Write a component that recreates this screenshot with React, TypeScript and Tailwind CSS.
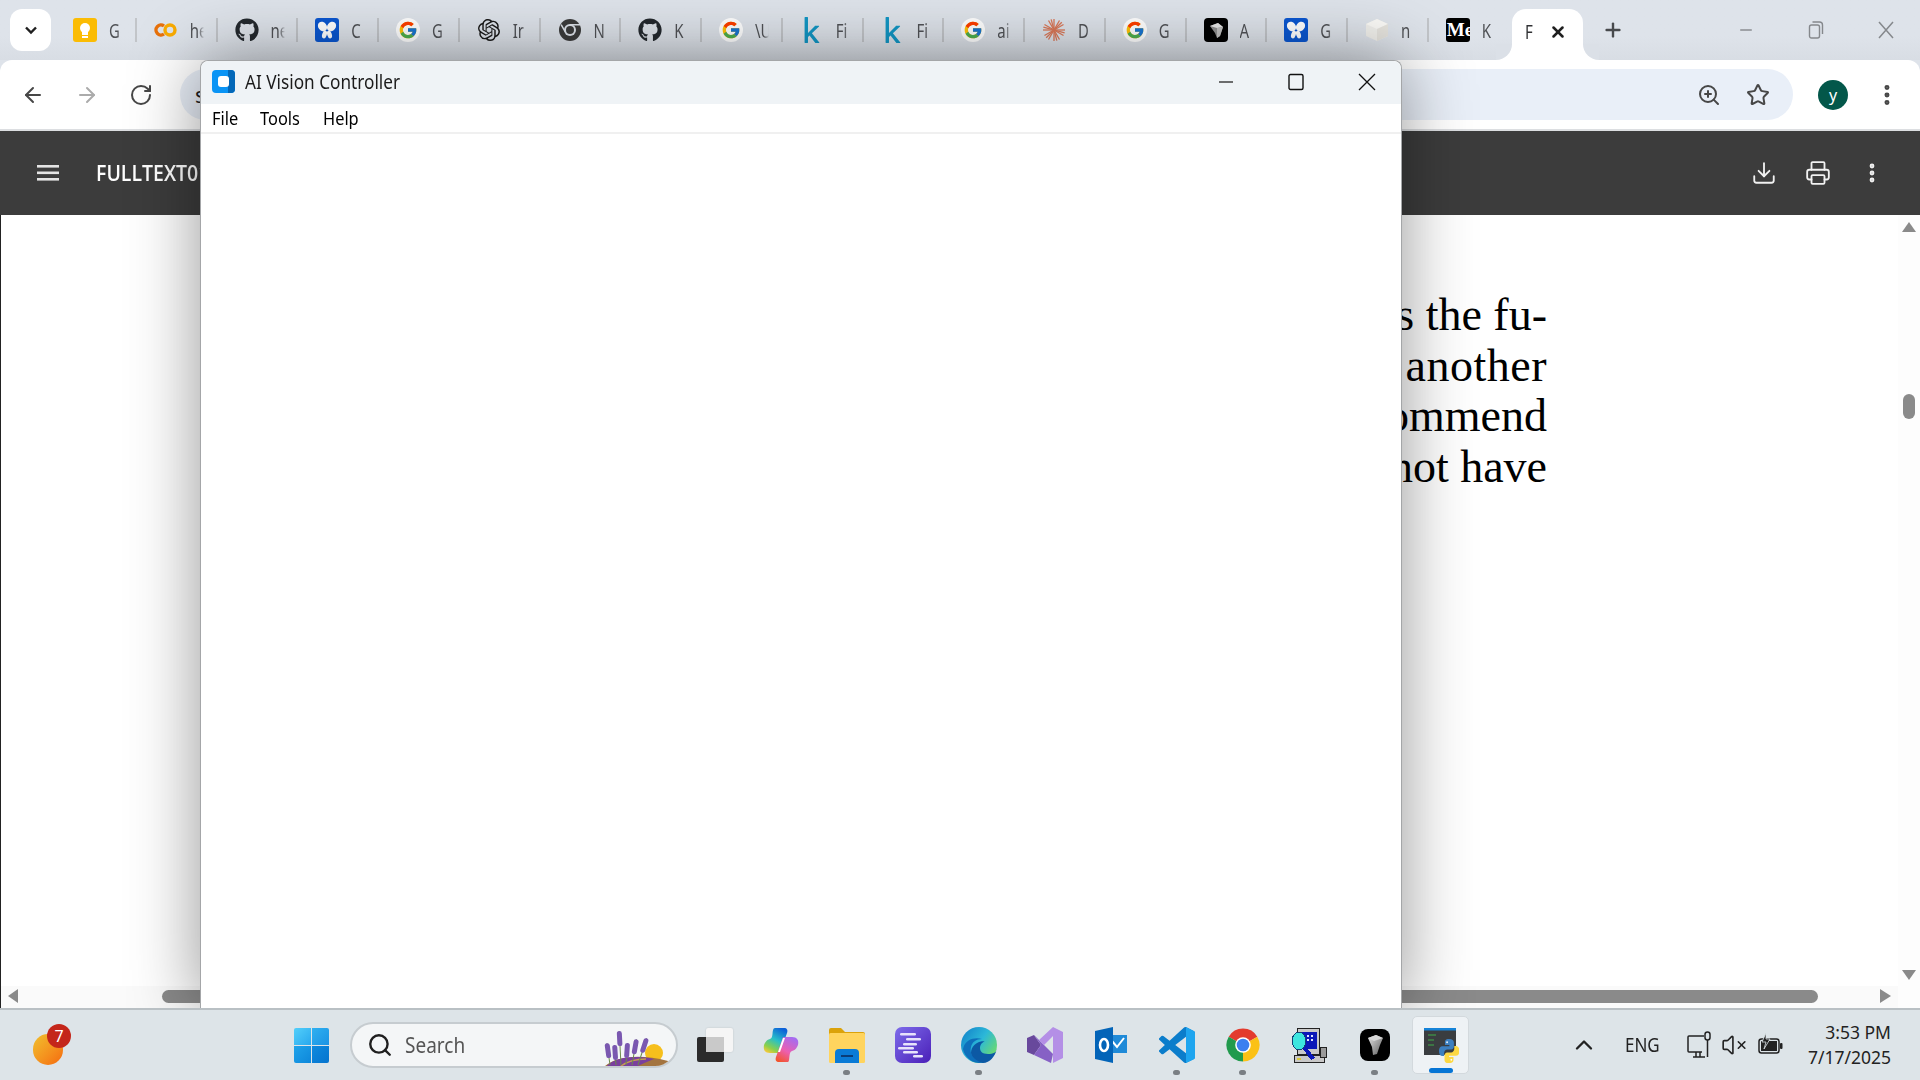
import type { ReactNode } from "react";
import { ArrowLeft, ArrowRight, ChevronUp, Download, EllipsisVertical, Minus, Plus, Printer, RotateCw, Search, Star, VolumeX, X, ZoomIn } from "lucide-react";
import { FcGoogle } from "react-icons/fc";
import { FaGithub, FaKaggle } from "react-icons/fa";
import { SiOpenai } from "react-icons/si";

const ui = { fontFamily: '"Noto Sans", sans-serif' };

function Keep() {
    return <svg width="24" height="24" viewBox="0 0 24 24">
        <rect x="0" y="0" width="24" height="24" rx="3" fill="#fbbc04" />
        <circle cx="12" cy="10" r="5" fill="#fff" />
        <rect x="9" y="13" width="6" height="4" fill="#fff" />
        <rect x="9" y="18" width="6" height="2" fill="#fff" />
    </svg>
}

function Colab() {
    return <svg width="24" height="24" viewBox="0 0 24 24" fill="none" strokeWidth="3.4">
        <path d="M10 8a5 5 0 1 0 0 8" stroke="#e8710a" />
        <circle cx="16" cy="12" r="5" stroke="#f9ab00" />
    </svg>
}

function Butterfly() {
    return <svg width="24" height="24" viewBox="0 0 24 24">
        <rect width="24" height="24" rx="3" fill="#0b57d0" />
        <g fill="#fff">
            <ellipse cx="7.500" cy="8.500" rx="4.200" ry="5.200" transform="rotate(-38 7.500 8.500)" />
            <ellipse cx="16.500" cy="8.500" rx="4.200" ry="5.200" transform="rotate(38 16.500 8.500)" />
            <ellipse cx="9.500" cy="16.500" rx="2.300" ry="4" transform="rotate(18 9.500 16.500)" />
            <ellipse cx="14.500" cy="16.500" rx="2.300" ry="4" transform="rotate(-18 14.500 16.500)" />
        </g>
    </svg>
}

function GoogleTab() {
    return <div className="w-6 h-6 rounded-full bg-white flex items-center justify-center">
        <FcGoogle size={20} />
    </div>
}

function ChromeGray() {
    return <svg width="24" height="24" viewBox="0 0 24 24">
        <circle cx="12" cy="12" r="11" fill="#3c3c3c" />
        <circle cx="12" cy="12" r="6" fill="#dee3ea" />
        <circle cx="12" cy="12" r="4" fill="#3c3c3c" />
        <path d="M12 6h10v1.5H12zM6.5 14l-4-7 1.3-.8 4 7z" fill="#dee3ea" />
    </svg>
}

function Burst() {
    const angles = [0, 30, 60, 90, 120, 150, 15, 75, 135];
    return <svg width="24" height="24" viewBox="0 0 24 24">
        {angles.map((a) => <line key={a} x1="1" y1="12" x2="23" y2="12" stroke="#d97757" strokeWidth="1.3" transform={`rotate(${a} 12 12)`} />)}
    </svg>
}

function BlackGem() {
    return <svg width="24" height="24" viewBox="0 0 24 24">
        <rect width="24" height="24" rx="4" fill="#000" />
        <path d="M6 8l8-3 5 4-3 9-3 2-2-5z" fill="#8f8f8f" />
        <path d="M6 8l8-3 5 4-6 1z" fill="#e6e6e6" />
        <path d="M13 10l6-1-3 9-3 2z" fill="#bfbfbf" />
    </svg>
}

function Cube() {
    return <svg width="24" height="24" viewBox="0 0 24 24">
        <path d="M12 1l11 5v12l-11 5-11-5V6z" fill="#f1f0ec" />
        <path d="M12 1l11 5-11 5L1 6z" fill="#fbfaf7" />
        <path d="M23 6v12l-11 5V11z" fill="#e6e4de" />
    </svg>
}

function Medium() {
    return <div className="w-6 h-6 rounded-[3px] bg-black overflow-hidden text-white font-bold text-[19px] leading-6 pl-px" style={{ fontFamily: '"Liberation Serif", serif' }}>Me</div>
}

const tabs: { icon: ReactNode; letter: string }[] = [
    { icon: <Keep />, letter: "G" },
    { icon: <Colab />, letter: "he" },
    { icon: <FaGithub size={24} color="#24292e" />, letter: "ne" },
    { icon: <Butterfly />, letter: "C" },
    { icon: <GoogleTab />, letter: "G" },
    { icon: <SiOpenai size={22} color="#1a1a1a" />, letter: "Ir" },
    { icon: <ChromeGray />, letter: "N" },
    { icon: <FaGithub size={24} color="#24292e" />, letter: "K" },
    { icon: <GoogleTab />, letter: "\\U" },
    { icon: <FaKaggle size={26} color="#1296c4" />, letter: "Fi" },
    { icon: <FaKaggle size={26} color="#1296c4" />, letter: "Fi" },
    { icon: <GoogleTab />, letter: "ai" },
    { icon: <Burst />, letter: "D" },
    { icon: <GoogleTab />, letter: "G" },
    { icon: <BlackGem />, letter: "A" },
    { icon: <Butterfly />, letter: "G" },
    { icon: <Cube />, letter: "n" },
    { icon: <Medium />, letter: "K" },
];

function TabStrip() {
    return <div className="h-[60px] flex items-center bg-linear-to-b from-[#dee3ea] from-60% to-[#d8dde4] shrink-0">
        <div className="w-[56px] h-full flex items-center pl-[10px] shrink-0">
            <div className="w-[41px] h-[42px] rounded-[12px] bg-white flex items-center justify-center">
                <svg width="16" height="16" viewBox="0 0 16 16" fill="none" stroke="#1f1f1f" strokeWidth="2.4"><path d="M3 5.500l5 5 5-5" /></svg>
            </div>
        </div>
        {tabs.map((t, i) => <div key={i} className={`w-[80.75px] h-6 flex items-center pl-[17px] shrink-0 ${i < tabs.length - 1 ? "border-r-2 border-[#c2c5c9]" : ""}`}>
            <div className="w-6 h-6 flex items-center justify-center shrink-0">{t.icon}</div>
            <div className="ml-[12px] w-[14px] overflow-hidden whitespace-nowrap text-[15px] text-[#505256] scale-y-[1.3] [mask-image:linear-gradient(to_right,black_60%,transparent)]" style={ui}>{t.letter}</div>
        </div>)}
        <div className="relative self-end ml-[2.5px] w-[71px] h-[51px] bg-white rounded-t-[14px] flex items-center pl-[13px] pb-[6px] shrink-0">
            <div className="absolute -left-4 bottom-0 w-4 h-4 bg-white" />
            <div className="absolute -left-4 bottom-0 w-4 h-4 bg-[#dbe0e7] rounded-br-[16px]" />
            <div className="absolute -right-4 bottom-0 w-4 h-4 bg-white" />
            <div className="absolute -right-4 bottom-0 w-4 h-4 bg-[#dbe0e7] rounded-bl-[16px]" />
            <div className="w-[11px] overflow-hidden text-[15px] text-[#303134] scale-y-[1.3]" style={ui}>F</div>
            <X size={18} strokeWidth={3.4} color="#1f1f1f" className="ml-[13px]" />
        </div>
        <Plus size={22} strokeWidth={2.6} color="#47494c" className="ml-[19px]" />
        <div className="ml-auto flex items-center gap-[54px] pr-[26px]">
            <Minus size={18} color="#8a8d91" className="-mx-px" />
            <svg width="16" height="20" viewBox="0 0 16 20" fill="none" stroke="#85888c" strokeWidth="1.4">
                <rect x="1.500" y="5" width="10" height="13" rx="2" />
                <path d="M4.500 2h7a3 3 0 0 1 3 3v9" />
            </svg>
            <svg width="16" height="18" viewBox="0 0 16 18" fill="none" stroke="#85888c" strokeWidth="1.5"><path d="M1 1l14 16M15 1L1 17" /></svg>
        </div>
    </div>
}

function BrowserBar() {
    return <div className="h-[71px] shrink-0 bg-white rounded-t-[12px] border-b-2 border-[#dcdee1] flex items-center">
        <div className="pl-[21px] flex items-center gap-[30px]">
            <ArrowLeft size={24} color="#474747" />
            <ArrowRight size={24} color="#ababab" />
            <RotateCw size={24} color="#474747" />
        </div>
        <div className="ml-[27px] w-[1613px] h-[51px] rounded-full bg-[#e9eff8] flex items-center justify-end pr-[23px] gap-[25px]">
            <div className="mr-auto ml-[15px] text-[22px] text-[#1f1f1f]" style={ui}>s</div>
            <ZoomIn size={24} color="#474747" />
            <Star size={24} color="#474747" />
        </div>
        <div className="ml-[25px] w-[30px] h-[30px] rounded-full bg-[#03574a] text-white text-[16px] flex items-center justify-center" style={ui}>y</div>
        <EllipsisVertical size={26} strokeWidth={2.6} color="#474747" className="ml-[26px]" />
    </div>
}

function PdfBar() {
    return <div className="h-[84px] shrink-0 bg-[#3c3c3c] flex items-center pl-[37px] pr-[36px] text-white">
        <svg width="22" height="16" viewBox="0 0 22 16" fill="#e4e4e4">
            <rect y="0" width="22" height="2.600" />
            <rect y="6.500" width="22" height="2.600" />
            <rect y="13" width="22" height="2.600" />
        </svg>
        <div className="ml-[37px] text-[19.5px] font-semibold inline-block scale-y-[1.12] origin-left" style={{ fontFamily: '"Open Sans", sans-serif' }}>FULLTEXT01.pdf</div>
        <div className="ml-auto flex items-center">
            <Download size={26} strokeWidth={1.7} color="#f1f1f1" />
            <Printer size={26} strokeWidth={1.7} color="#f1f1f1" className="ml-[28px]" />
            <EllipsisVertical size={24} strokeWidth={2.8} color="#f1f1f1" className="ml-[29px]" />
        </div>
    </div>
}

function DocArea() {
    return <div className="flex-1 flex min-h-0 border-l border-[#222]">
        <div className="flex-1 flex flex-col min-w-0">
            <div className="flex-1 pt-[75px] pr-[351px] text-right text-black text-[46px] leading-[50.5px] bg-white" style={{ fontFamily: '"Liberation Serif", serif' }}>
                <p>s the fu-</p>
                <p className="tracking-[0.5px]">another</p>
                <p>ommend</p>
                <p>not have</p>
            </div>
            <div className="h-[22px] bg-[#fafafa] flex items-center pb-[2px]">
                <div className="ml-[7px] w-0 h-0 border-y-[7px] border-y-transparent border-r-[10px] border-r-[#8a8a8a]" />
                <div className="ml-[144px] w-[1656px] h-[13px] rounded-full bg-[#8a8a8a]" />
                <div className="ml-[62px] w-0 h-0 border-y-[7px] border-y-transparent border-l-[11px] border-l-[#8a8a8a]" />
            </div>
        </div>
        <div className="w-[22px] bg-[#fdfdfd] flex flex-col items-center pt-[7px] pb-[28px]">
            <div className="w-0 h-0 border-x-[7px] border-x-transparent border-b-[10px] border-b-[#8a8a8a]" />
            <div className="mt-[162px] w-[12px] h-[25px] rounded-full bg-[#8a8a8a]" />
            <div className="mt-auto w-0 h-0 border-x-[7px] border-x-transparent border-t-[10px] border-t-[#8a8a8a]" />
        </div>
    </div>
}

function AppWindow() {
    return <div className="absolute left-[200px] top-[60px] z-10 w-[1202px] h-[949px] bg-white rounded-t-[8px] border border-b-0 border-[#a4a6a8] shadow-[0_0_70px_rgba(0,0,0,0.42)] text-black" style={ui}>
        <div className="h-[43px] bg-[#eff3f6] rounded-t-[8px] flex items-center pl-[11px] pr-[25px] pb-[2px]">
            <svg width="23" height="23" viewBox="0 0 23 23">
                <rect width="23" height="23" rx="4" fill="#0a94f5" />
                <path d="M16 0h3a4 4 0 0 1 4 4v15a4 4 0 0 1-4 4h-3z" fill="#0468b8" />
                <rect x="6" y="6" width="11" height="11" rx="3" fill="#fff" />
            </svg>
            <span className="ml-[10px] text-[17.2px] inline-block scale-y-[1.15] text-[#1c1c1c]">AI Vision Controller</span>
            <div className="ml-auto flex items-center gap-[54px]">
                <svg width="16" height="16" viewBox="0 0 16 16" stroke="#111" strokeWidth="1.2"><path d="M1 8h14" /></svg>
                <svg width="16" height="18" viewBox="0 0 16 18" fill="none" stroke="#111" strokeWidth="1.4"><rect x="1" y="1.500" width="14" height="15" rx="1.500" /></svg>
                <svg width="18" height="18" viewBox="0 0 18 18" fill="none" stroke="#111" strokeWidth="1.3"><path d="M1 1l16 16M17 1L1 17" /></svg>
            </div>
        </div>
        <div className="h-[28px] flex items-center pl-[11px] border-b-2 border-[#f0f0f0] box-content text-[16.4px]">
            <span className="inline-block scale-y-[1.15] w-[48px]">File</span>
            <span className="inline-block scale-y-[1.15] w-[63px]">Tools</span>
            <span className="inline-block scale-y-[1.15]">Help</span>
        </div>
    </div>
}

function Lavender() {
    const stems = [
        { x: 6, top: 14, a: -8 },
        { x: 12, top: 16, a: -4 },
        { x: 17, top: 2, a: -3 },
        { x: 22, top: 14, a: 4 },
        { x: 28, top: 10, a: 10 },
        { x: 34, top: 8, a: 18 },
    ];
    return <svg width="66" height="38" viewBox="0 0 66 38">
        <circle cx="50" cy="24" r="9" fill="#f6bf1c" />
        <path d="M0 38c10-10 34-14 64-6 1 2 2 6-2 6z" fill="#a3743f" />
        <path d="M2 38C10 28 30 26 50 30c-8 3-14 6-18 8z" fill="#7a3f9e" />
        <path d="M16 38c6-5 14-8 26-8" stroke="#c59a52" strokeWidth="1.4" fill="none" />
        {stems.map((s) => <g key={s.x} transform={`rotate(${s.a} ${s.x} 36)`}>
            <line x1={s.x} y1="36" x2={s.x} y2={s.top} stroke="#6c8a4a" strokeWidth="1" />
            <rect x={s.x - 2.500} y={s.top} width="5" height="15" rx="2.500" fill="#7a58b0" />
        </g>)}
    </svg>
}

function Copilot() {
    return <svg width="36" height="36" viewBox="0 0 36 36" fill="none">
        <defs>
            <linearGradient id="cpa" x1="0.7" y1="0" x2="0.2" y2="1"><stop offset="0" stopColor="#0d62d8" /><stop offset="0.45" stopColor="#27c0c8" /><stop offset="0.8" stopColor="#8bd04a" /><stop offset="1" stopColor="#f5c93a" /></linearGradient>
            <linearGradient id="cpb" x1="0.7" y1="0" x2="0.2" y2="1"><stop offset="0" stopColor="#a56cf0" /><stop offset="0.55" stopColor="#ec5fb0" /><stop offset="1" stopColor="#f2542d" /></linearGradient>
        </defs>
        <path d="M12 1h9c3 0 4 2 3 5l-7 20H7c-5 0-7-3-6-8 1-2 2-5 6-6 2-1 2-2 2.500-5 .3-3 .5-6 2.500-6z" fill="url(#cpa)" />
        <path d="M25 35h-9c-3 0-4-2-3-5l7-20h9c5 0 7 3 6 8-1 2-2 5-6 6-2 1-2 2-2.500 5-.3 3-.5 6-1.500 6z" fill="url(#cpb)" />
        <path d="M20 11l-5 14h2l5-14z" fill="#fff" />
    </svg>
}

function Folder() {
    return <svg width="36" height="36" viewBox="0 0 36 36">
        <path d="M0 3a2 2 0 0 1 2-2h10l4 4h18a2 2 0 0 1 2 2v4H0z" fill="#dba20a" />
        <rect y="6" width="36" height="30" rx="1.500" fill="#ffd45e" />
        <path d="M6 36v-10a4 4 0 0 1 4-4h16a4 4 0 0 1 4 4v10z" fill="#0a7bd6" />
        <rect x="12" y="28" width="12" height="2" fill="#0a3d78" />
    </svg>
}

function PurpleNotes() {
    return <svg width="36" height="36" viewBox="0 0 36 36">
        <defs><linearGradient id="pn" x1="0" y1="0" x2="1" y2="1"><stop offset="0" stopColor="#7d6bea" /><stop offset="1" stopColor="#4a1fb8" /></linearGradient></defs>
        <rect width="36" height="36" rx="7" fill="url(#pn)" />
        <g fill="#e7e2fb">
            <rect x="5" y="6" width="16" height="2.600" rx="1.300" />
            <rect x="11" y="11" width="15" height="2.600" rx="1.300" />
            <rect x="8" y="16" width="14" height="2.600" rx="1.300" />
            <rect x="3" y="20" width="16" height="2.600" rx="1.300" />
            <rect x="8" y="24" width="15" height="2.600" rx="1.300" />
            <rect x="18" y="28" width="10" height="2.600" rx="1.300" />
        </g>
    </svg>
}

function Edge() {
    return <svg width="36" height="36" viewBox="0 0 36 36">
        <defs><linearGradient id="ed" x1="0" y1="0" x2="1" y2="0.7"><stop offset="0" stopColor="#0f7dc9" /><stop offset="0.55" stopColor="#2cb8d8" /><stop offset="1" stopColor="#6fdc6a" /></linearGradient></defs>
        <circle cx="18" cy="18" r="18" fill="url(#ed)" />
        <path d="M36 22c0 3-4 5-9 5-6 0-8-3-8-6 0-5 5-7 5-7-9 0-14 6-14 12 0 6 6 10 12 10 7 0 12-7 14-14z" fill="#0c59a4" />
        <path d="M10 20c-2 8 4 14 12 16-9 1-18-4-20-14 2-10 12-12 19-10-6 0-10 3-11 8z" fill="#0e6fbb" />
    </svg>
}

function VisualStudio() {
    return <svg width="36" height="36" viewBox="0 0 36 36">
        <path d="M0 11l7-3 7 10-7 10-7-3z" fill="#68489c" />
        <path d="M7 8l19 19-2 9L7 28l7-10z" fill="#8661c5" />
        <path d="M26 0l10 5v26l-10 5V9l-9 9-5-5z" fill="#b48fe6" />
    </svg>
}

function Outlook() {
    return <svg width="32" height="36" viewBox="0 0 32 36">
        <path d="M14 8h18v18H14z" fill="#1f8ad8" />
        <path d="M17 14l5 6 7-9" fill="none" stroke="#fff" strokeWidth="2" />
        <path d="M0 4l18-4v36L0 32z" fill="#0364b8" />
        <ellipse cx="9" cy="18" rx="4" ry="6" fill="none" stroke="#fff" strokeWidth="2.600" />
    </svg>
}

function VsCode() {
    return <svg width="36" height="36" viewBox="0 0 24 24">
        <path d="M23.15 2.587L18.21.21a1.494 1.494 0 0 0-1.705.29l-9.46 8.63-4.12-3.128a.999.999 0 0 0-1.276.057L.327 7.261A1 1 0 0 0 .326 8.74L3.899 12 .326 15.26a1 1 0 0 0 .001 1.479L1.65 17.94a.999.999 0 0 0 1.276.057l4.12-3.128 9.46 8.63a1.492 1.492 0 0 0 1.704.29l4.942-2.377A1.5 1.5 0 0 0 24 20.06V3.939a1.5 1.5 0 0 0-.85-1.352zm-5.146 14.861L10.826 12l7.178-5.448v10.896z" fill="#0b7dcb" />
        <path d="M18 0v6.500V17.500V24l5-2.400A1.500 1.500 0 0 0 24 20V4a1.500 1.500 0 0 0-.85-1.400z" fill="#1ea5ef" />
    </svg>
}

function Chrome() {
    return <svg width="36" height="36" viewBox="0 0 24 24">
        <path d="M12 12L2.470 6.500A11 11 0 0 1 21.530 6.500z" fill="#e33b2e" />
        <path d="M12 12l9.530-5.500A11 11 0 0 1 12 23z" fill="#fbc116" />
        <path d="M12 12v11A11 11 0 0 1 2.470 6.500z" fill="#219a4d" />
        <circle cx="12" cy="12" r="5.200" fill="#fff" />
        <circle cx="12" cy="12" r="4.200" fill="#3b7ff0" />
    </svg>
}

function NetTool() {
    return <svg width="36" height="36" viewBox="0 0 36 36" shapeRendering="crispEdges">
        <rect x="3" y="28" width="30" height="7" fill="#c8c8c8" stroke="#222" />
        <rect x="6" y="1" width="22" height="26" fill="#c9c9c9" stroke="#222" />
        <rect x="11" y="5" width="15" height="17" fill="#0b18b8" />
        <path d="M16 8h2v2h-2zM20 8h2v2h-2zM16 12h2v2h-2zM20 12h2v2h-2z" fill="#dfe4ff" />
        <ellipse cx="8" cy="14" rx="7" ry="9" fill="#3de6df" stroke="#147" />
        <path d="M12 22l8 11 4-2-8-10z" fill="#0b18b8" />
        <rect x="29" y="20" width="6" height="10" fill="#9a9a9a" stroke="#222" />
        <rect x="6" y="31" width="4" height="2" fill="#d7c93a" />
    </svg>
}

function BlackTask() {
    return <svg width="30" height="32" viewBox="0 0 30 32">
        <defs><linearGradient id="gem" x1="0" y1="0" x2="1" y2="1"><stop offset="0" stopColor="#e8e8e8" /><stop offset="1" stopColor="#5a5a5a" /></linearGradient></defs>
        <rect width="30" height="32" rx="8" fill="#000" />
        <path d="M8 9l8-3 7 3-3 7-3 9-4 1-1-8z" fill="url(#gem)" />
        <path d="M8 9l8-3 7 3-9 3z" fill="#d8d8d8" />
    </svg>
}

function PythonConsole() {
    return <svg width="36" height="36" viewBox="0 0 36 36">
        <rect x="1" y="1" width="32" height="27" fill="#3a3d40" />
        <rect x="1" y="1" width="32" height="2.500" fill="#1583d8" />
        <path d="M5 8h8M5 13h6M5 18h6" stroke="#3fae49" strokeWidth="1" />
        <g transform="translate(16 12) scale(0.85 1)">
            <path d="M12 0C7 0 7 2 7 3.500v2.500h5.200v1.200H4C1.500 7.200 0 9 0 12s1.500 5 4 5h2v-2.800c0-2 1.700-3.700 3.700-3.700h4.800c1.700 0 3-1.400 3-3V3.500C17.500 1.500 15.500 0 12 0z" fill="#3c7fc0" />
            <path d="M12 24c5 0 5-2 5-3.500V18h-5.200v-1.200H20c2.500 0 4-1.800 4-4.800s-1.500-5-4-5h-2v2.800c0 2-1.700 3.700-3.700 3.700H9.500c-1.700 0-3 1.400-3 3v4.500c0 2 2 3.500 5.500 3.500z" fill="#fdd843" />
            <circle cx="9.500" cy="3.200" r="1" fill="#fff" />
            <circle cx="14.500" cy="20.800" r="1" fill="#fff" />
        </g>
    </svg>
}

const taskIcons: { icon: ReactNode; dot?: boolean }[] = [
    { icon: <Copilot /> },
    { icon: <Folder />, dot: true },
    { icon: <PurpleNotes /> },
    { icon: <Edge />, dot: true },
    { icon: <VisualStudio /> },
    { icon: <Outlook /> },
    { icon: <VsCode />, dot: true },
    { icon: <Chrome />, dot: true },
    { icon: <NetTool /> },
    { icon: <BlackTask />, dot: true },
];

function Taskbar() {
    return <div className="relative z-20 h-[72px] shrink-0 bg-[#dde4e8] border-t-2 border-[#b9c0c4] flex items-center" style={ui}>
        <div className="relative ml-[33px] w-[30px] h-[31px] mt-[8px] rounded-full bg-linear-to-br from-[#efc02e] to-[#f4690f]">
            <div className="absolute left-[14px] -top-[10px] w-6 h-6 rounded-full bg-[#c4261a] text-white text-[16px] flex items-center justify-center">7</div>
        </div>
        <div className="ml-[231px] w-[35px] h-[35px] grid grid-cols-2 gap-px">
            <div className="rounded-tl-[2px] bg-linear-to-br from-[#52cffa] to-[#27a8ee]" />
            <div className="rounded-tr-[2px] bg-linear-to-br from-[#2fb0f0] to-[#1b93e4]" />
            <div className="rounded-bl-[2px] bg-linear-to-br from-[#1fa3ea] to-[#0d87da]" />
            <div className="rounded-br-[2px] bg-linear-to-br from-[#0f8ade] to-[#0674ce]" />
        </div>
        <div className="ml-[21px] w-[328px] h-[46px] rounded-full bg-[#f4f6f7] border-2 border-[#c6ccd0] flex items-center pl-[15px] overflow-hidden">
            <Search size={26} strokeWidth={2.2} color="#1f1f1f" />
            <span className="ml-[12px] text-[19px] text-[#555] inline-block scale-y-[1.15]">Search</span>
            <div className="ml-auto mr-[6px] self-end h-[38px] -mb-[1px]"><Lavender /></div>
        </div>
        <div className="ml-[19px] w-[36px] h-[34px] relative">
            <div className="absolute left-[9px] top-0 w-[27px] h-[24px] rounded-[2px] bg-[#f5f5f5] shadow-[0_0_2px_rgba(0,0,0,0.15)]" />
            <div className="absolute left-0 top-[9px] w-[27px] h-[25px] rounded-[2px] bg-[#2b2b2b]" />
            <div className="absolute left-[9px] top-[9px] w-[18px] h-[15px] bg-[#c9c9c9]" />
        </div>
        <div className="ml-[30px] flex items-center">
            {taskIcons.map((t, i) => <div key={i} className="relative w-[36px] h-[36px] mr-[30px] flex items-center justify-center shrink-0">
                {t.icon}
                {t.dot && <div className="absolute left-[14px] top-[43px] w-[7px] h-[5px] rounded-full bg-[#7a7f84]" />}
            </div>)}
        </div>
        <div className="-ml-[11px] relative w-[57px] h-[58px] rounded-[5px] bg-[#eef2f5] border border-[#d3d9dd] flex items-center justify-center shrink-0">
            <PythonConsole />
            <div className="absolute left-[16px] bottom-0 w-[24px] h-[5px] rounded-full bg-[#0675d5]" />
        </div>
        <ChevronUp size={28} strokeWidth={2} color="#222" className="ml-[101px]" />
        <span className="ml-[27px] text-[17px] text-[#222] inline-block scale-y-[1.15]">ENG</span>
        <svg className="ml-[27px]" width="24" height="28" viewBox="0 0 24 28" fill="none" stroke="#222" strokeWidth="1.500">
            <path d="M17 5H2a1 1 0 0 0-1 1v14a1 1 0 0 0 1 1h13" />
            <path d="M6 26h12M9 21v5M13 21v5" />
            <rect x="18" y="1" width="5" height="8" rx="2.500" />
            <path d="M20.500 9v17" />
        </svg>
        <div className="ml-[10px] flex items-center">
            <VolumeX size={26} strokeWidth={1.5} color="#222" />
        </div>
        <svg className="ml-[11px]" width="25" height="24" viewBox="0 0 25 24" fill="none">
            <rect x="1" y="6" width="20" height="14" rx="2.500" stroke="#222" strokeWidth="1.500" />
            <rect x="3" y="8" width="16" height="10" fill="#222" />
            <rect x="22" y="10" width="2.500" height="6" rx="1" fill="#222" />
            <path d="M8 0L4 9h4l-2 7 6-10H8z" fill="#222" stroke="#dde4e8" strokeWidth="0.800" />
        </svg>
        <div className="ml-auto pr-[29px] text-right text-[17.5px] leading-[25px] text-[#222] -mt-[1px]">
            <div>3:53 PM</div>
            <div>7/17/2025</div>
        </div>
    </div>
}

export default function App() {
    return <div className="relative w-[1920px] h-[1080px] overflow-hidden flex flex-col bg-[#dee3ea]">
        <TabStrip />
        <BrowserBar />
        <PdfBar />
        <DocArea />
        <AppWindow />
        <Taskbar />
    </div>
}
